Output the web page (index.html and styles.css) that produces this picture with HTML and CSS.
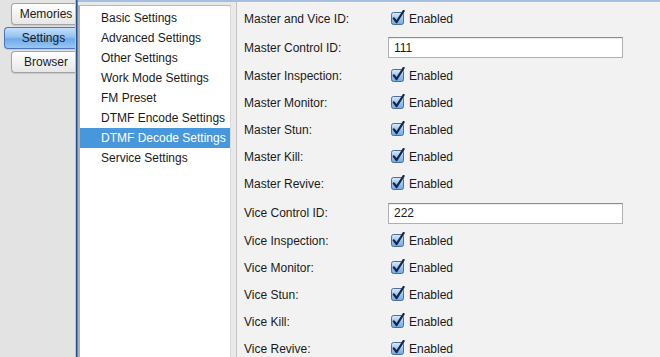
FILE: index.html
```html
<!DOCTYPE html>
<html lang="en">
<head>
  <meta charset="UTF-8">
  <meta name="viewport" content="width=device-width, initial-scale=1.0">
  <title>DTMF Decode Settings</title>
  <link rel="stylesheet" href="styles.css">
</head>
<body>
  <div class="tabs">
    <div class="tab">Memories</div>
    <div class="tab active">Settings</div>
    <div class="tab">Browser</div>
  </div>
  <div class="divider"></div>
  <div class="pane">
    <div class="list">
      <div class="item">Basic Settings</div>
      <div class="item">Advanced Settings</div>
      <div class="item">Other Settings</div>
      <div class="item">Work Mode Settings</div>
      <div class="item">FM Preset</div>
      <div class="item">DTMF Encode Settings</div>
      <div class="item selected">DTMF Decode Settings</div>
      <div class="item">Service Settings</div>
    </div>
    <div class="gap"></div>
    <div class="content">
      <div class="row"><span class="label">Master and Vice ID:</span><span class="check"><svg width="14" height="15" viewBox="0 0 14 15"><defs><linearGradient id="cb" x1="0" y1="0" x2="0" y2="1"><stop offset="0" stop-color="#dbeafa"/><stop offset="0.5" stop-color="#9cc6ef"/><stop offset="1" stop-color="#6fa8e6"/></linearGradient></defs><rect x="0.5" y="2.5" width="12" height="12" rx="2" fill="url(#cb)" stroke="#4d6d9c"/><path d="M2.8 8.4 L5.6 12 L12.6 1" fill="none" stroke="#15264a" stroke-width="2.3" stroke-linecap="round" stroke-linejoin="round"/></svg>Enabled</span></div>
      <div class="row field"><span class="label">Master Control ID:</span><input type="text" value="111"></div>
      <div class="row"><span class="label">Master Inspection:</span><span class="check"><svg width="14" height="15" viewBox="0 0 14 15"><rect x="0.5" y="2.5" width="12" height="12" rx="2" fill="url(#cb)" stroke="#4d6d9c"/><path d="M2.8 8.4 L5.6 12 L12.6 1" fill="none" stroke="#15264a" stroke-width="2.3" stroke-linecap="round" stroke-linejoin="round"/></svg>Enabled</span></div>
      <div class="row"><span class="label">Master Monitor:</span><span class="check"><svg width="14" height="15" viewBox="0 0 14 15"><rect x="0.5" y="2.5" width="12" height="12" rx="2" fill="url(#cb)" stroke="#4d6d9c"/><path d="M2.8 8.4 L5.6 12 L12.6 1" fill="none" stroke="#15264a" stroke-width="2.3" stroke-linecap="round" stroke-linejoin="round"/></svg>Enabled</span></div>
      <div class="row"><span class="label">Master Stun:</span><span class="check"><svg width="14" height="15" viewBox="0 0 14 15"><rect x="0.5" y="2.5" width="12" height="12" rx="2" fill="url(#cb)" stroke="#4d6d9c"/><path d="M2.8 8.4 L5.6 12 L12.6 1" fill="none" stroke="#15264a" stroke-width="2.3" stroke-linecap="round" stroke-linejoin="round"/></svg>Enabled</span></div>
      <div class="row"><span class="label">Master Kill:</span><span class="check"><svg width="14" height="15" viewBox="0 0 14 15"><rect x="0.5" y="2.5" width="12" height="12" rx="2" fill="url(#cb)" stroke="#4d6d9c"/><path d="M2.8 8.4 L5.6 12 L12.6 1" fill="none" stroke="#15264a" stroke-width="2.3" stroke-linecap="round" stroke-linejoin="round"/></svg>Enabled</span></div>
      <div class="row"><span class="label">Master Revive:</span><span class="check"><svg width="14" height="15" viewBox="0 0 14 15"><rect x="0.5" y="2.5" width="12" height="12" rx="2" fill="url(#cb)" stroke="#4d6d9c"/><path d="M2.8 8.4 L5.6 12 L12.6 1" fill="none" stroke="#15264a" stroke-width="2.3" stroke-linecap="round" stroke-linejoin="round"/></svg>Enabled</span></div>
      <div class="row field wide"><span class="label">Vice Control ID:</span><input type="text" value="222"></div>
      <div class="row"><span class="label">Vice Inspection:</span><span class="check"><svg width="14" height="15" viewBox="0 0 14 15"><rect x="0.5" y="2.5" width="12" height="12" rx="2" fill="url(#cb)" stroke="#4d6d9c"/><path d="M2.8 8.4 L5.6 12 L12.6 1" fill="none" stroke="#15264a" stroke-width="2.3" stroke-linecap="round" stroke-linejoin="round"/></svg>Enabled</span></div>
      <div class="row"><span class="label">Vice Monitor:</span><span class="check"><svg width="14" height="15" viewBox="0 0 14 15"><rect x="0.5" y="2.5" width="12" height="12" rx="2" fill="url(#cb)" stroke="#4d6d9c"/><path d="M2.8 8.4 L5.6 12 L12.6 1" fill="none" stroke="#15264a" stroke-width="2.3" stroke-linecap="round" stroke-linejoin="round"/></svg>Enabled</span></div>
      <div class="row"><span class="label">Vice Stun:</span><span class="check"><svg width="14" height="15" viewBox="0 0 14 15"><rect x="0.5" y="2.5" width="12" height="12" rx="2" fill="url(#cb)" stroke="#4d6d9c"/><path d="M2.8 8.4 L5.6 12 L12.6 1" fill="none" stroke="#15264a" stroke-width="2.3" stroke-linecap="round" stroke-linejoin="round"/></svg>Enabled</span></div>
      <div class="row"><span class="label">Vice Kill:</span><span class="check"><svg width="14" height="15" viewBox="0 0 14 15"><rect x="0.5" y="2.5" width="12" height="12" rx="2" fill="url(#cb)" stroke="#4d6d9c"/><path d="M2.8 8.4 L5.6 12 L12.6 1" fill="none" stroke="#15264a" stroke-width="2.3" stroke-linecap="round" stroke-linejoin="round"/></svg>Enabled</span></div>
      <div class="row"><span class="label">Vice Revive:</span><span class="check"><svg width="14" height="15" viewBox="0 0 14 15"><rect x="0.5" y="2.5" width="12" height="12" rx="2" fill="url(#cb)" stroke="#4d6d9c"/><path d="M2.8 8.4 L5.6 12 L12.6 1" fill="none" stroke="#15264a" stroke-width="2.3" stroke-linecap="round" stroke-linejoin="round"/></svg>Enabled</span></div>
    </div>
  </div>
</body>
</html>
```

FILE: styles.css
```css
html, body {
  margin: 0;
  padding: 0;
  height: 100%;
  overflow: hidden;
  font-family: 'Liberation Sans', Arial, sans-serif;
  font-size: 12px;
  color: #1a1a1a;
}
body {
  display: flex;
  width: 660px;
  height: 357px;
  background: #e3e3e3;
}
.tabs {
  width: 75px;
  flex-shrink: 0;
  display: flex;
  flex-direction: column;
  align-items: flex-end;
  gap: 2px;
  padding-top: 3px;
  box-sizing: border-box;
}
.tab {
  box-sizing: border-box;
  width: 64px;
  height: 22px;
  line-height: 20px;
  padding-left: 5px;
  text-align: center;
  border: 1px solid #a4a4a4;
  border-right: none;
  border-radius: 4px 0 0 4px;
  background: linear-gradient(#ffffff, #f3f3f3 50%, #e6e6e6);
  box-shadow: 0 1px 1px rgba(0, 0, 0, 0.12);
}
.tab.active {
  width: 71px;
  padding-left: 7px;
  border-color: #4b78b4;
  background: linear-gradient(#c6e0fa, #93c2f1 45%, #70aae9 55%, #97c8f4);
}
.divider {
  width: 1px;
  flex-shrink: 0;
  background: #234f8c;
  border-left: 1px solid #a9c7ea;
  border-right: 1px solid #4d8bd1;
}
.pane {
  flex: 1;
  display: flex;
  border-top: 2px solid #a3bfe2;
  background: #e9e9e9;
}
.list {
  width: 150px;
  flex-shrink: 0;
  margin-top: 3px;
  padding-top: 2px;
  background: #ffffff;
  border-top: 1px solid #b8b8b8;
  border-left: 2px solid #b0b0b0;
  border-right: 1px solid #dadada;
}
.item {
  height: 20px;
  line-height: 20px;
  padding-left: 21px;
  white-space: nowrap;
}
.item.selected {
  background: #4797dc;
  color: #ffffff;
}
.gap {
  width: 5px;
  flex-shrink: 0;
  border-right: 1px solid #c4c4c4;
}
.content {
  flex: 1;
  padding: 3px 0 0 7px;
  background: #f2f2f2;
  box-shadow: inset 0 1px 0 #fbf5f5;
}
.row {
  display: flex;
  align-items: center;
  height: 27px;
}
.row.field {
  height: 29px;
  margin-top: 1px;
}
.row.field.wide {
  height: 28px;
  margin-top: 2px;
}
.label {
  width: 144px;
  flex-shrink: 0;
}
.check {
  display: flex;
  align-items: center;
  margin-left: 3px;
}
.check svg {
  margin-right: 4px;
  margin-top: -3px;
}
input[type="text"] {
  box-sizing: border-box;
  width: 235px;
  height: 21px;
  margin: 0;
  padding: 0 5px;
  font: inherit;
  color: #1a1a1a;
  background: #ffffff;
  border: 1px solid #b0b0b0;
  border-top-color: #8c8c8c;
  box-shadow: inset 0 1px 1px rgba(0, 0, 0, 0.08);
  outline: none;
}
```
